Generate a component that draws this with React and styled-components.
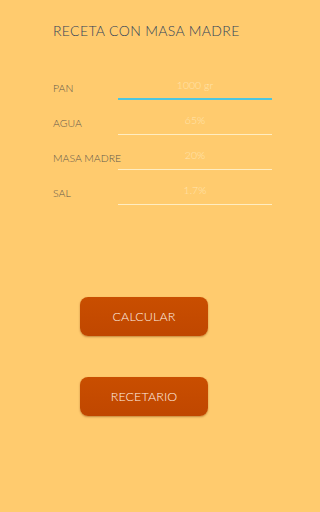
import React from "react";
import styled, { createGlobalStyle } from "styled-components";

const Global = createGlobalStyle`
  html, body { margin: 0; padding: 0; background: #ffcb6e; }
  body { font-family: "Lato", "Open Sans", sans-serif; }
`;

const Page = styled.div`
  width: 288px;
  height: 512px;
  background: #ffcb6e;
  box-sizing: border-box;
  padding: 22px 16px 0 53px;
  display: flex;
  flex-direction: column;
`;

const Title = styled.h1`
  margin: 0;
  font-family: "Lato", sans-serif;
  font-weight: 300;
  font-size: 14px;
  letter-spacing: 0.35px;
  color: #31435a;
  line-height: 18px;
  white-space: nowrap;
`;

const Form = styled.div`
  margin-top: 38px;
  display: flex;
  flex-direction: column;
  gap: 13px;
`;

const Row = styled.div`
  display: flex;
  align-items: flex-end;
  height: 22px;
`;

const Label = styled.span`
  width: 65px;
  font-weight: 300;
  font-size: 10.5px;
  color: #5f594d;
  padding-bottom: 6px;
  white-space: nowrap;
  overflow: visible;
`;

const Field = styled.div`
  flex: 1;
  height: 100%;
  box-sizing: border-box;
  border-bottom: ${(p) => (p.$focused ? "2px solid #4cc6e0" : "1px solid #ffedc2")};
  color: #ffe4ae;
  font-weight: 300;
  font-size: 10.5px;
  text-align: center;
  display: flex;
  align-items: center;
  justify-content: center;
  padding-bottom: ${(p) => (p.$focused ? "6px" : "7px")};
`;

const Buttons = styled.div`
  margin-top: 92px;
  margin-left: 27px;
  display: flex;
  flex-direction: column;
  gap: 41px;
  align-items: flex-start;
`;

const Button = styled.button`
  width: 128px;
  height: 39px;
  border: none;
  border-radius: 8px;
  background: linear-gradient(#c94e00, #c04700);
  box-shadow: 0 1px 2px rgba(120, 50, 0, 0.45);
  color: #fff1e6;
  font-family: "Lato", sans-serif;
  font-weight: 300;
  font-size: 12.5px;
  letter-spacing: 0.1px;
  cursor: pointer;
`;

const rows = [
  { label: "PAN", value: "1000 gr", focused: true },
  { label: "AGUA", value: "65%" },
  { label: "MASA MADRE", value: "20%" },
  { label: "SAL", value: "1.7%" },
];

export default function App() {
  return (
    <>
      <Global />
      <Page>
        <Title>RECETA CON MASA MADRE</Title>
        <Form>
          {rows.map((r) => (
            <Row key={r.label}>
              <Label>{r.label}</Label>
              <Field $focused={r.focused}>{r.value}</Field>
            </Row>
          ))}
        </Form>
        <Buttons>
          <Button>CALCULAR</Button>
          <Button>RECETARIO</Button>
        </Buttons>
      </Page>
    </>
  );
}
